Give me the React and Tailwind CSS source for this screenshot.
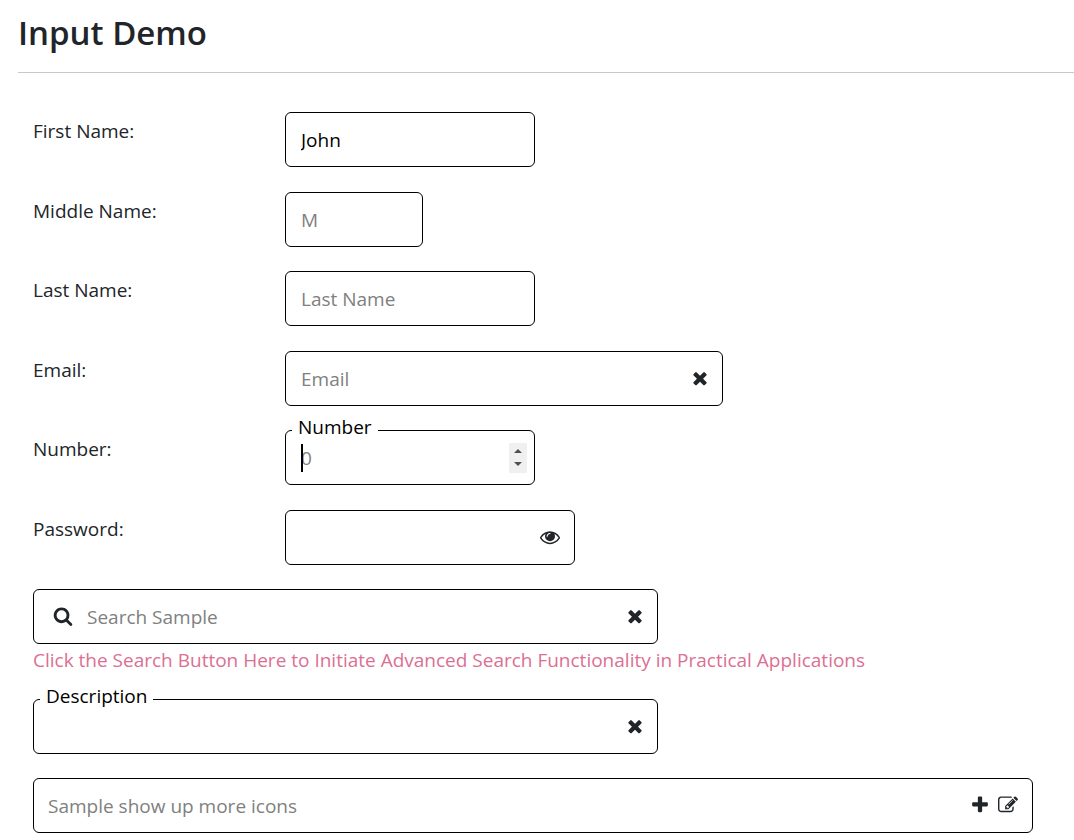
import React from "react";

const ICONS = {
  times:
    "M1490 1322q0 40-28 68l-136 136q-28 28-68 28t-68-28l-294-294-294 294q-28 28-68 28t-68-28l-136-136q-28-28-28-68t28-68l294-294-294-294q-28-28-28-68t28-68l136-136q28-28 68-28t68 28l294 294 294-294q28-28 68-28t68 28l136 136q28 28 28 68t-28 68l-294 294 294 294q28 28 28 68z",
  search:
    "M1216 832q0-185-131.5-316.5t-316.5-131.5-316.5 131.5-131.5 316.5 131.5 316.5 316.5 131.5 316.5-131.5 131.5-316.5zm512 832q0 52-38 90t-90 38q-54 0-90-38l-343-342q-179 124-399 124-143 0-273.5-55.5t-225-150-150-225-55.5-273.5 55.5-273.5 150-225 225-150 273.5-55.5 273.5 55.5 225 150 150 225 55.5 273.5q0 220-124 399l343 343q37 37 37 90z",
  plus:
    "M1600 736v192q0 40-28 68t-68 28h-416v416q0 40-28 68t-68 28h-192q-40 0-68-28t-28-68v-416h-416q-40 0-68-28t-28-68v-192q0-40 28-68t68-28h416v-416q0-40 28-68t68-28h192q40 0 68 28t28 68v416h416q40 0 68 28t28 68z",
  eye:
    "M1664 960q-152-236-381-353 61 104 61 225 0 185-131.5 316.5t-316.5 131.5-316.5-131.5-131.5-316.5q0-121 61-225-229 117-381 353 133 205 333.5 326.5t434.5 121.5 434.5-121.5 333.5-326.5zm-720-384q0-20-14-34t-34-14q-125 0-214.5 89.5t-89.5 214.5q0 20 14 34t34 14 34-14 14-34q0-86 61-147t147-61q20 0 34-14t14-34zm848 384q0 34-20 69-140 230-376.5 368.5t-499.5 138.5-499.5-139-376.5-368q-20-35-20-69t20-69q140-229 376.5-368t499.5-139 499.5 139 376.5 368q20 35 20 69z",
  edit:
    "M888 1184l116-116-152-152-116 116v56h96v96h56zm440-720q-16-16-33 1l-350 350q-17 17-1 33t33-1l350-350q17-17 1-33zm80 594v190q0 119-84.5 203.5t-203.5 84.5h-832q-119 0-203.5-84.5t-84.5-203.5v-832q0-119 84.5-203.5t203.5-84.5h832q63 0 117 25 15 7 18 23 3 17-9 29l-49 49q-14 14-32 8-23-6-45-6h-832q-66 0-113 47t-47 113v832q0 66 47 113t113 47h832q66 0 113-47t47-113v-126q0-13 9-22l64-64q15-15 35-7t20 29zm-96-738l288 288-672 672h-288v-288zm444 132l-92 92-288-288 92-92q28-28 68-28t68 28l152 152q28 28 28 68t-28 68z",
};

function IconButton({ icon, label }) {
  return (
    <button type="button" aria-label={label} className="shrink-0 pb-px text-[#212529]">
      <svg viewBox="0 0 1792 1792" fill="currentColor" className="size-5" aria-hidden="true">
        <path d={ICONS[icon]} />
      </svg>
    </button>
  );
}

const inputClass =
  "h-full w-full min-w-0 flex-1 bg-transparent text-black outline-none placeholder:text-[#808080]";

function Box({ className, children }) {
  return (
    <div className={`relative flex h-[55px] w-full items-center rounded-md border border-black ${className}`}>
      {children}
    </div>
  );
}

function FloatingLabel({ htmlFor, children }) {
  return (
    <label htmlFor={htmlFor} className="absolute -top-4 left-1.5 bg-white px-1.5 leading-6 text-black">
      {children}
    </label>
  );
}

function Row({ id, label, children }) {
  return (
    <div className="flex items-start">
      <label htmlFor={id} className="w-[252px] shrink-0 pt-[5px] leading-7">
        {label}
      </label>
      {children}
    </div>
  );
}

export default function App() {
  return (
    <main className="bg-white pl-[18px] font-['Open_Sans',sans-serif] text-[19px] text-[#212529]">
      <h1 className="pt-3 text-[33px] leading-[42px] font-semibold">Input Demo</h1>
      <hr className="mt-[18px] border-[#c8c9ca]" />

      <form className="mt-[39px] flex flex-col gap-6 px-[15px] pb-2" autoComplete="off">
        <div className="flex flex-col gap-[25px]">
          <Row id="first" label="First Name:">
            <Box className="max-w-[250px] px-[15px]">
              <input id="first" type="text" defaultValue="John" className={inputClass} />
            </Box>
          </Row>
          <Row id="middle" label="Middle Name:">
            <Box className="max-w-[138px] px-[15px]">
              <input id="middle" type="text" placeholder="M" className={inputClass} />
            </Box>
          </Row>
        </div>

        <div className="flex flex-col gap-[25px]">
          <Row id="last" label="Last Name:">
            <Box className="max-w-[250px] px-[15px]">
              <input id="last" type="text" placeholder="Last Name" className={inputClass} />
            </Box>
          </Row>
          <Row id="email" label="Email:">
            <Box className="max-w-[438px] pr-3 pl-[15px]">
              <input id="email" type="email" placeholder="Email" className={inputClass} />
              <IconButton icon="times" label="Clear email" />
            </Box>
          </Row>
        </div>

        <div className="flex flex-col gap-[25px]">
          <Row id="number" label="Number:">
            <Box className="max-w-[250px] pr-[7px] pl-[15px]">
              <FloatingLabel htmlFor="number">Number</FloatingLabel>
              <span className="absolute left-[15px] h-7 w-0.5 bg-black" aria-hidden="true" />
              <input
                id="number"
                type="number"
                placeholder="0"
                className={`${inputClass} caret-transparent [appearance:textfield]`}
              />
              <span className="flex h-[30px] w-[18px] flex-col bg-[#f0f0f0] text-[#505050]">
                <button type="button" aria-label="Increase" className="flex flex-1 items-center justify-center pt-0.5">
                  <svg viewBox="0 0 8 4" className="h-1 w-2" fill="currentColor">
                    <path d="M0 4 4 0 8 4z" />
                  </svg>
                </button>
                <button type="button" aria-label="Decrease" className="flex flex-1 items-center justify-center pb-0.5">
                  <svg viewBox="0 0 8 4" className="h-1 w-2" fill="currentColor">
                    <path d="M0 0 4 4 8 0z" />
                  </svg>
                </button>
              </span>
            </Box>
          </Row>
          <Row id="password" label="Password:">
            <Box className="max-w-[290px] pr-3.5 pl-[15px]">
              <input id="password" type="password" className={inputClass} />
              <IconButton icon="eye" label="Show password" />
            </Box>
          </Row>
        </div>

        <div>
          <Box className="max-w-[625px] gap-3.5 pr-3 pl-[19px]">
            <IconButton icon="search" label="Search" />
            <input type="text" aria-label="Search" placeholder="Search Sample" className={inputClass} />
            <IconButton icon="times" label="Clear search" />
          </Box>
          <p className="mt-0.5 pb-px leading-7 text-[#db7093]">
            Click the Search Button Here to Initiate Advanced Search Functionality in Practical Applications
          </p>
        </div>

        <Box className="max-w-[625px] pr-3 pl-[15px]">
          <FloatingLabel htmlFor="description">Description</FloatingLabel>
          <input id="description" type="text" className={inputClass} />
          <IconButton icon="times" label="Clear description" />
        </Box>

        <Box className="max-w-[1000px] gap-2 px-3.5">
          <input type="text" aria-label="More icons" placeholder="Sample show up more icons" className={inputClass} />
          <IconButton icon="plus" label="Add" />
          <IconButton icon="edit" label="Edit" />
        </Box>
      </form>
    </main>
  );
}
